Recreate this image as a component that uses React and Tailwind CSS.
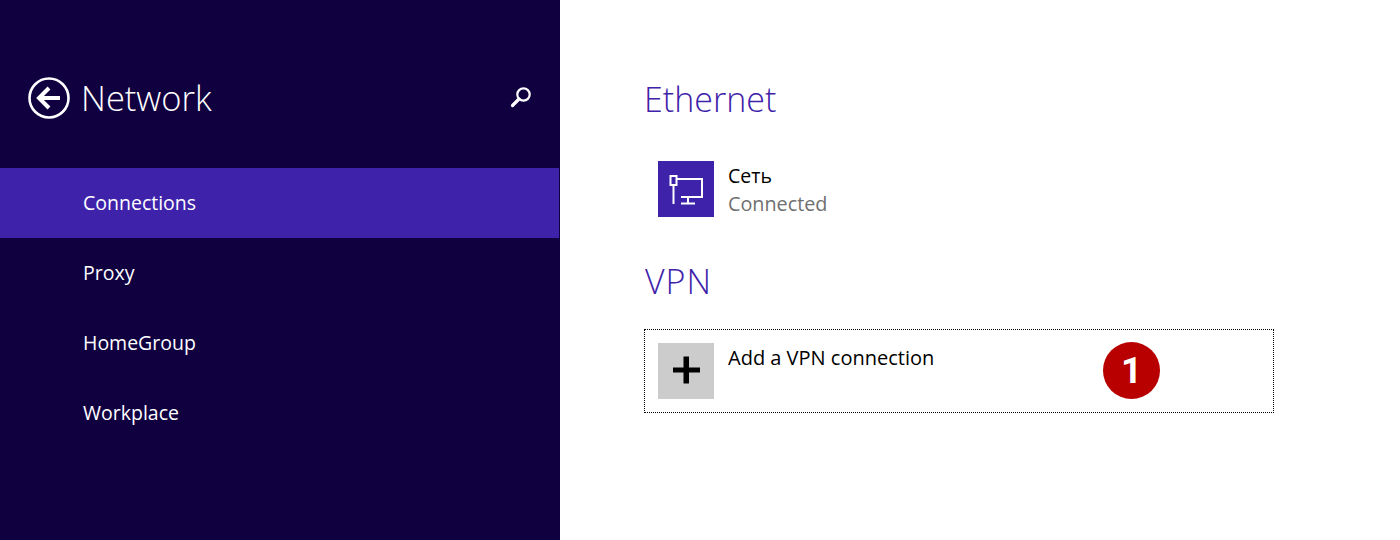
import React from "react"

const menu = ["Connections", "Proxy", "HomeGroup", "Workplace"]

function BackIcon() {
  return (
    <svg width="42" height="42" viewBox="0 0 42 42" fill="none" stroke="#fff">
      <circle cx="21" cy="21" r="19.5" strokeWidth="2.6" />
      <path d="M12 21H32" strokeWidth="4" />
      <path d="M21 11L11 21L21 31" strokeWidth="4" />
    </svg>
  )
}

function SearchIcon() {
  return (
    <svg width="22" height="22" viewBox="0 0 22 22" fill="none" stroke="#fff">
      <circle cx="13.5" cy="7.5" r="6.2" strokeWidth="2.2" />
      <path d="M9 12L2.5 18.5" strokeWidth="3.2" strokeLinecap="round" />
    </svg>
  )
}

function NetworkIcon() {
  return (
    <svg width="56" height="56" viewBox="0 0 56 56" fill="none" stroke="#fff" strokeWidth="2">
      <rect x="12.5" y="15" width="6" height="9" />
      <path d="M15.5 24V43" />
      <path d="M18.5 18H44V36H23" />
      <path d="M30 36V42" />
      <path d="M23 42.5H37" />
    </svg>
  )
}

export default function App() {
  return (
    <div className="flex w-[1400px] h-[540px] overflow-hidden bg-white font-['Open_Sans',sans-serif]">
      <aside className="w-[560px] shrink-0 bg-[#100040] text-white">
        <div className="flex items-center h-[42px] mt-[77px] mb-[49px] pl-[28px] pr-[28px]">
          <BackIcon />
          <h1 className="ml-[11px] text-[34.5px] font-light leading-none">Network</h1>
          <span className="ml-auto">
            <SearchIcon />
          </span>
        </div>
        {menu.map((item, i) => (
          <div
            key={item}
            className={`flex items-center h-[70px] pl-[83px] pb-px text-[19.5px] ${i === 0 ? "bg-[#3e22aa] mr-px" : ""}`}
          >
            {item}
          </div>
        ))}
      </aside>

      <main className="flex-1 pl-[84px] pt-[77px]">
        <h2 className="h-[44px] text-[34px] font-light leading-[44px] text-[#3e22aa]">Ethernet</h2>
        <div className="flex ml-[14px] mt-[40px]">
          <div className="w-[56px] h-[56px] bg-[#3e22aa]">
            <NetworkIcon />
          </div>
          <div className="ml-[14px] pt-px text-[19.8px] leading-[28px]">
            <div className="text-black text-[19.5px]">Сеть</div>
            <div className="text-[#6f6f6f]">Connected</div>
          </div>
        </div>
        <h2 className="h-[44px] mt-[41px] pl-px text-[34px] font-light leading-[44px] tracking-[1px] text-[#3e22aa]">VPN</h2>
        <div className="relative flex w-[630px] h-[84px] mt-[26px] p-[13px] border border-dotted border-black">
          <div className="w-[56px] h-[56px] bg-[#cccccc]">
            <svg width="56" height="56" viewBox="0 0 56 56" fill="#000">
              <path d="M25.5 13.5H31V24.5H42V29.5H31V40.5H25.5V29.5H15V24.5H25.5Z" />
            </svg>
          </div>
          <div className="ml-[14px] pt-px text-[20px] leading-[28px] text-black">Add a VPN connection</div>
          <div className="absolute left-[458px] top-[12px] flex items-center justify-center w-[57px] h-[57px] rounded-full bg-[#b80000] text-[37px] font-bold text-white font-['Roboto',sans-serif]">
            1
          </div>
        </div>
      </main>
    </div>
  )
}
